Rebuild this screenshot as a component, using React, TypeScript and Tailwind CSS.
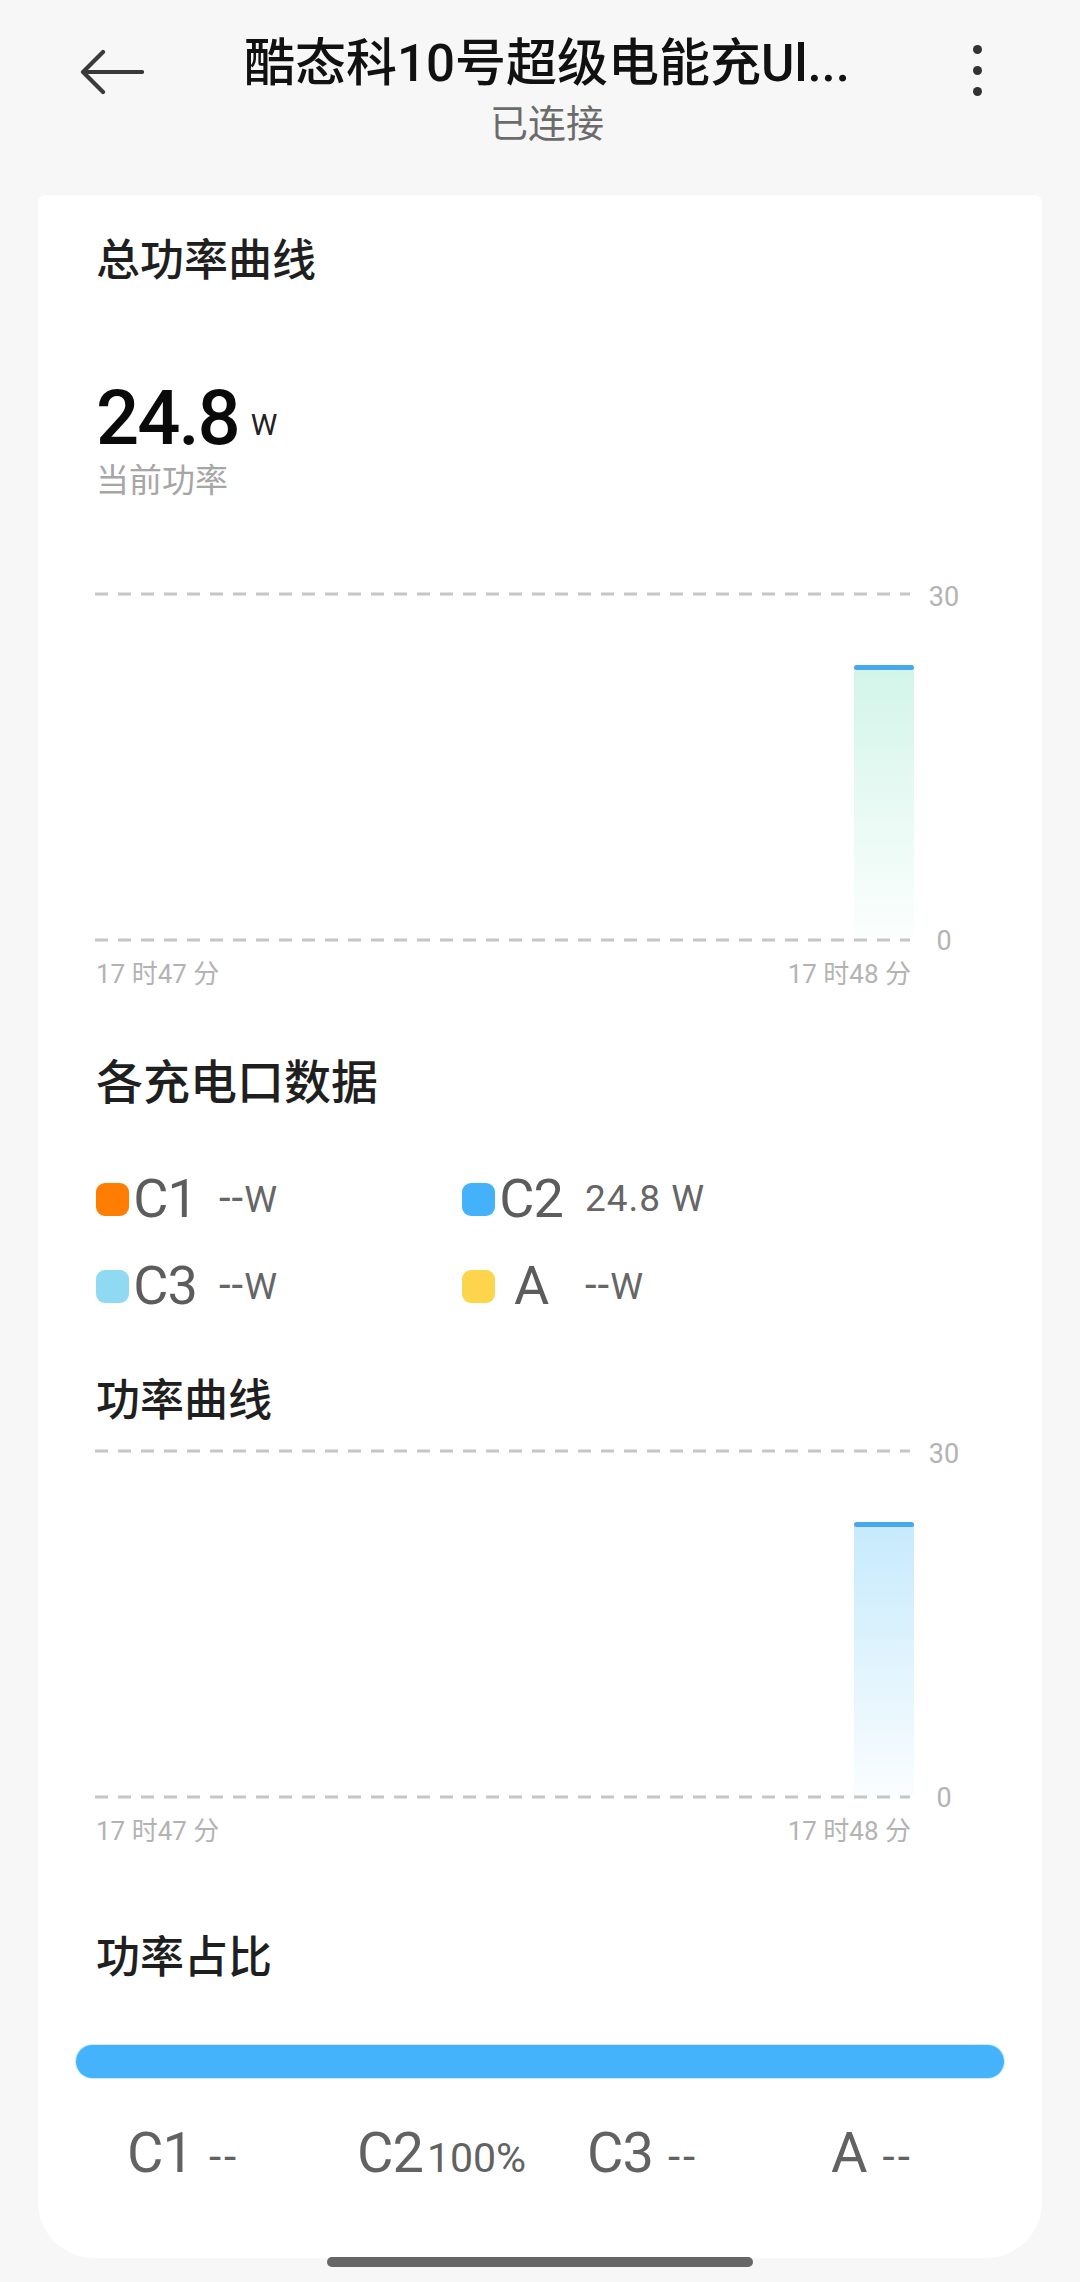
import React from 'react';

type Port = { name: string; watts: string | null; swatch: string };

const PORTS: Port[] = [
  { name: 'C1', watts: null, swatch: 'bg-[#ff7d00]' },
  { name: 'C2', watts: '24.8', swatch: 'bg-[#44b2fa]' },
  { name: 'C3', watts: null, swatch: 'bg-[#8fd9f2]' },
  { name: 'A', watts: null, swatch: 'bg-[#fdd54c]' },
];

const SHARES = [
  { name: 'C1', value: '--', name2: '', gap: 'ml-[16px] text-[44px] tracking-[3px]' },
  { name: 'C2', value: '100%', name2: '', gap: 'ml-[4px] text-[41px]' },
  { name: 'C3', value: '--', name2: '', gap: 'ml-[15px] text-[44px] tracking-[3px]' },
  { name: 'A', value: '--', name2: 'ml-[14px]', gap: 'ml-[16px] text-[44px] tracking-[3px]' },
];

function SectionTitle({ children, className = '' }: { children: React.ReactNode; className?: string }) {
  return (
    <h2 className={`leading-[60px] font-medium text-[#1f1f1f] ${className}`}>
      {children}
    </h2>
  );
}

// dashed grid, one bar at the latest minute
function PowerChart({ id, fill }: { id: string; fill: string }) {
  return (
    <div>
      <div className="flex">
        <svg width="820" height="370" viewBox="0 0 820 370" className="shrink-0 -ml-[1px]">
          <defs>
            <linearGradient id={id} x1="0" y1="0" x2="0" y2="1">
              <stop offset="0" stopColor={fill} />
              <stop offset="1" stopColor={fill} stopOpacity="0.08" />
            </linearGradient>
          </defs>
          <line x1="0" y1="10" x2="815" y2="10" stroke="#c6c6c6" strokeWidth="3" strokeDasharray="13 10" />
          <line x1="0" y1="356" x2="815" y2="356" stroke="#c6c6c6" strokeWidth="3" strokeDasharray="13 10" />
          <rect x="759" y="85" width="60" height="270" fill={`url(#${id})`} />
          <rect x="759" y="81" width="60" height="5" rx="2.5" fill="#47a8eb" />
        </svg>
        <div className="flex h-[370px] w-[58px] flex-col items-center justify-between text-[27px] leading-[26px] text-[#b3b3b3]">
          <span>30</span>
          <span>0</span>
        </div>
      </div>
      <div className="mt-[2px] flex w-[815px] justify-between text-[26px] leading-[36px] text-[#b3b3b3]">
        <span>17 时47 分</span>
        <span>17 时48 分</span>
      </div>
    </div>
  );
}

function PortLegend({ port }: { port: Port }) {
  return (
    <div className="flex h-[60px] items-center">
      <span className={`h-[33px] w-[33px] shrink-0 rounded-[9px] ${port.swatch}`} />
      <span className="w-[72px] text-center text-[54px] leading-[60px] tracking-[-1px] text-[#5c5c5c]">
        {port.name}
      </span>
      <span className="ml-[18px] text-[37px] leading-[60px] text-[#666666]">
        {port.watts ? (
          <span className="tracking-[1px]">{port.watts} W</span>
        ) : (
          <>
            <span className="text-[42px] tracking-[1px]">--</span>W
          </>
        )}
      </span>
    </div>
  );
}

export default function App() {
  return (
    <div className="min-h-[2282px] bg-[#f7f7f7] font-['Roboto','Noto_Sans_CJK_SC',sans-serif]">
      {/* Header */}
      <header className="flex h-[195px] items-start pl-[80px] pr-[98px] pt-[34px]">
        <div className="mt-[14px] w-[64px] shrink-0">
          <svg width="64" height="48" viewBox="0 0 64 48" fill="none">
            <path
              d="M3 24H62M23 4L3 24L23 44"
              stroke="#3a3a3a"
              strokeWidth="4.2"
              strokeLinecap="round"
              strokeLinejoin="round"
            />
          </svg>
        </div>
        <div className="flex flex-1 flex-col items-center pl-[32px]">
          <h1 className="whitespace-nowrap text-[51px] leading-[60px] font-medium text-[#111111]">
            酷态科10号超级电能充Ul...
          </h1>
          <p className="mt-[8px] text-[38px] leading-[44px] text-[#6b6b6b]">已连接</p>
        </div>
        <div className="mt-[11px] flex w-[64px] shrink-0 justify-end">
          <div className="flex flex-col gap-[12px]">
            <span className="h-[9px] w-[9px] rounded-full bg-[#333333]" />
            <span className="h-[9px] w-[9px] rounded-full bg-[#333333]" />
            <span className="h-[9px] w-[9px] rounded-full bg-[#333333]" />
          </div>
        </div>
      </header>

      {/* Card */}
      <main className="mx-[38px] rounded-t-[8px] rounded-b-[56px] bg-white px-[58px] pt-[36px] pb-[70px]">
        <SectionTitle className="text-[44px]">总功率曲线</SectionTitle>

        <div className="mt-[87px] flex items-end">
          <span className="text-[76px] leading-[80px] font-medium tracking-[-2px] text-[#0a0a0a]">24.8</span>
          <span className="mb-[18px] ml-[12px] text-[30px] leading-[30px] text-[#222222]">W</span>
        </div>
        <p className="mt-[3px] text-[33px] leading-[40px] text-[#a6a6a6]">当前功率</p>

        <div className="mt-[83px]">
          <PowerChart id="totalFill" fill="#d3f5e9" />
        </div>

        <SectionTitle className="mt-[61px] text-[47px]">各充电口数据</SectionTitle>

        <div className="mt-[56px] grid grid-cols-[366px_1fr] gap-y-[27px]">
          {PORTS.map((p) => (
            <PortLegend key={p.name} port={p} />
          ))}
        </div>

        <SectionTitle className="mt-[55px] text-[44px]">功率曲线</SectionTitle>

        <div className="mt-[10px]">
          <PowerChart id="portFill" fill="#c6eafc" />
        </div>

        <SectionTitle className="mt-[79px] text-[44px]">功率占比</SectionTitle>

        <div className="-mx-[20px] mt-[57px] h-[33px] rounded-full bg-[#45b3fb] shadow-[0_0_0_1px_#c9ecfd]" />

        <div className="mt-[45px] ml-[31px] grid grid-cols-[230px_230px_230px_1fr]">
          {SHARES.map((s) => (
            <div key={s.name} className="flex items-baseline text-[#626262]">
              <span className={`text-[56px] leading-[60px] tracking-[-1px] ${s.name2}`}>{s.name}</span>
              <span className={`leading-[60px] ${s.gap}`}>{s.value}</span>
            </div>
          ))}
        </div>
      </main>

      {/* Home indicator */}
      <div className="mx-auto -mt-[1px] h-[10px] w-[426px] rounded-full bg-[#666666]" />
    </div>
  );
}
